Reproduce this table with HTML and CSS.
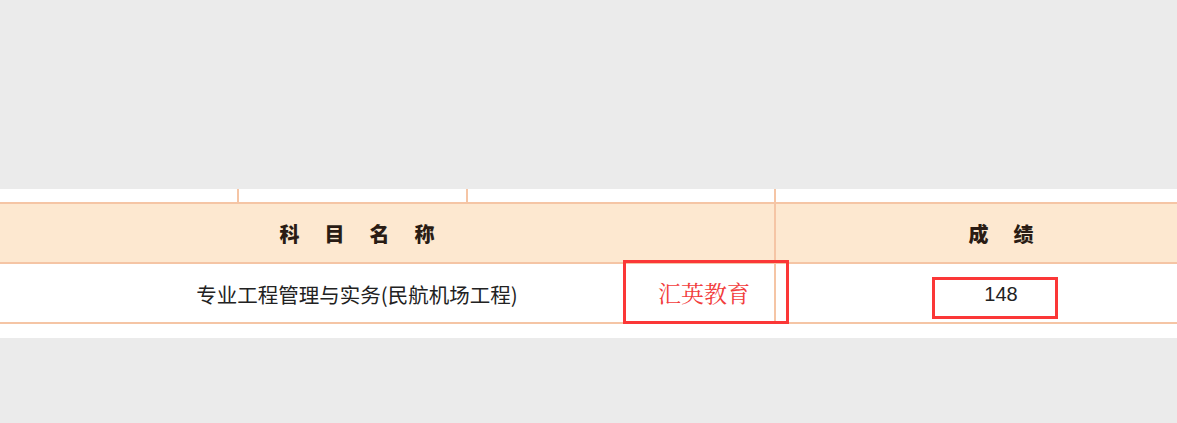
FILE: index.html
```html
<!DOCTYPE html>
<html lang="zh-CN">
<head>
  <meta charset="UTF-8">
  <title>成绩查询</title>
  <link rel="stylesheet" href="styles.css">
</head>
<body>
  <div class="sheet">
    <table class="score-table">
      <colgroup>
        <col class="c1"><col class="c2"><col class="c3"><col class="c4">
      </colgroup>
      <tr class="stub-row">
        <td></td><td></td><td></td><td></td>
      </tr>
      <tr class="head-row">
        <th colspan="3"><span class="spaced">科目名称</span></th>
        <th><span class="spaced">成绩</span></th>
      </tr>
      <tr class="data-row">
        <td colspan="3">专业工程管理与实务(民航机场工程)</td>
        <td class="num">148</td>
      </tr>
    </table>
    <div class="mark mark-name">汇英教育</div>
    <div class="mark mark-score"></div>
  </div>
</body>
</html>
```

FILE: styles.css
```css
html, body {
  margin: 0;
  padding: 0;
}
body {
  background: #ebebeb;
  font-family: "Noto Sans CJK SC", "Liberation Sans", sans-serif;
  overflow: hidden;
}
.sheet {
  position: relative;
  margin-top: 189px;
  height: 149px;
  background: #fff;
  overflow: hidden;
}
.score-table {
  margin-left: -62px;
  width: 1288px;
  table-layout: fixed;
  border-collapse: collapse;
}
.c1 { width: 299px; }
.c2 { width: 229px; }
.c3 { width: 308px; }
.c4 { width: 452px; }
.score-table td,
.score-table th {
  border: 2px solid #f5c5a5;
  padding: 0;
  text-align: center;
}
.stub-row td {
  border-top: none;
  height: 13px;
}
.head-row th {
  height: 58px;
  background: #fde8d0;
  color: #2a1c14;
  font-size: 20px;
  font-weight: 900;
}
.spaced {
  letter-spacing: 25px;
  padding-left: 25px;
}
.data-row td {
  height: 56px;
  padding-top: 2px;
  color: #222;
  font-size: 20.5px;
}
.data-row .num {
  font-family: "Liberation Sans", Arial, sans-serif;
  font-size: 20px;
}
.mark {
  position: absolute;
  box-sizing: border-box;
  border: 3px solid #fb3737;
}
.mark-name {
  left: 623px;
  top: 71px;
  width: 166px;
  height: 64px;
  padding-right: 4px;
  display: flex;
  align-items: center;
  justify-content: center;
  color: #f23c3c;
  font-family: "Noto Serif CJK SC", "Liberation Serif", serif;
  font-size: 23px;
}
.mark-score {
  left: 932px;
  top: 88px;
  width: 126px;
  height: 42px;
}
```
